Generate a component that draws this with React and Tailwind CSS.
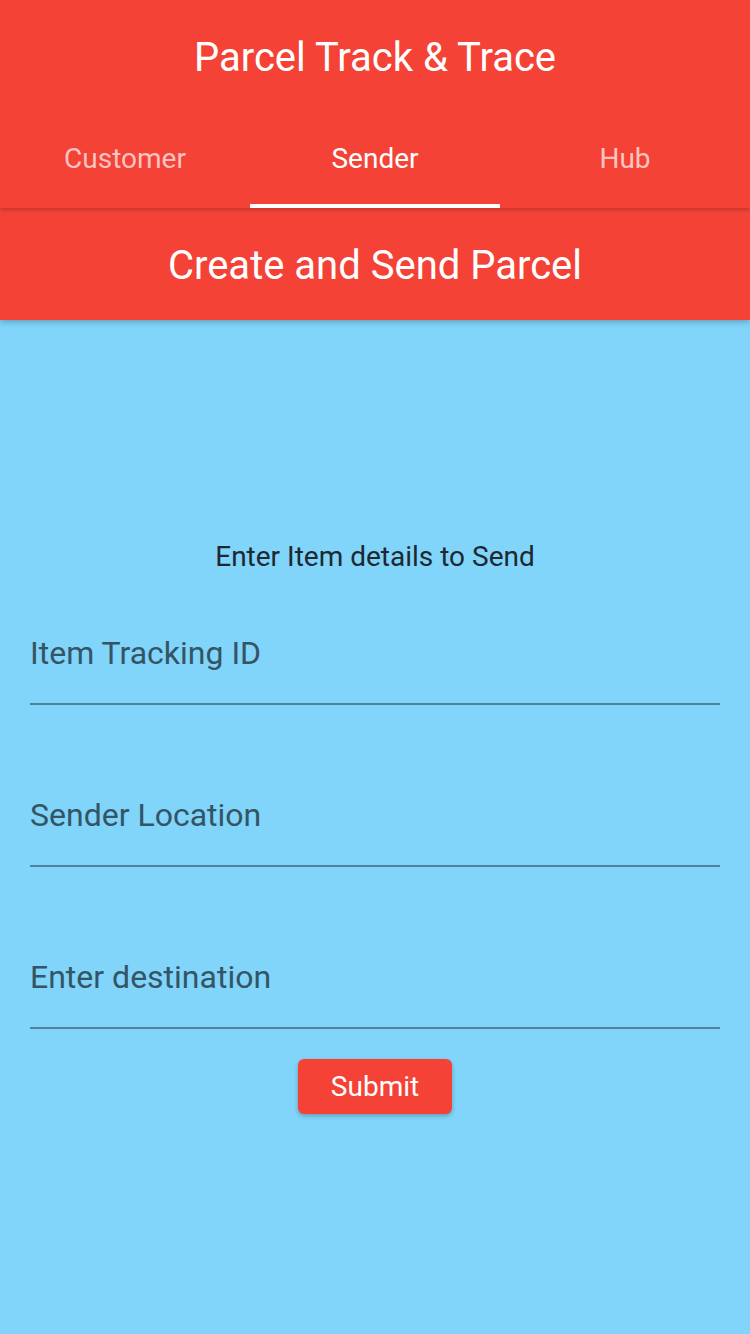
import React from 'react';

const tabs = ['Customer', 'Sender', 'Hub'];

const Field = ({ label, first }) => (
    <div className={`${first ? 'pt-[56px]' : 'pt-[90px]'} mx-[30px] border-b-2 border-[#50839b] pb-[30px]`}>
        <div className="text-[32px] leading-[40px] text-[#345564]">{label}</div>
    </div>
);

const App = () => {
    return (
        <div className="min-h-[1334px] bg-[#81d4fa] font-['Roboto',sans-serif]">
            <div className="relative z-20 bg-[#f44336] shadow-[0_2px_4px_rgba(0,0,0,0.2)]">
                <div className="flex h-[112px] items-center justify-center pt-[4px]">
                    <h1 className="text-[40px] leading-none text-white">Parcel Track &amp; Trace</h1>
                </div>
                <div className="flex h-[96px]">
                    {tabs.map((t) => (
                        <div key={t} className="relative flex flex-1 items-center justify-center pb-[2px]">
                            <span className={`text-[28px] leading-none ${t === 'Sender' ? 'text-white' : 'text-white/70'}`}>{t}</span>
                            {t === 'Sender' && <div className="absolute bottom-0 left-0 right-0 h-[4px] bg-white" />}
                        </div>
                    ))}
                </div>
            </div>
            <div className="relative z-10 flex h-[112px] items-center justify-center bg-[#f44336] pt-[4px] shadow-[0_2px_6px_rgba(0,0,0,0.25)]">
                <h2 className="text-[40px] leading-none text-white">Create and Send Parcel</h2>
            </div>

            <div className="flex flex-col">
                <p className="mt-[217px] text-center text-[28px] leading-[40px] text-[#1c2a30]">Enter Item details to Send</p>
                <Field label="Item Tracking ID" first />
                <Field label="Sender Location" />
                <Field label="Enter destination" />
                <div className="mt-[30px] flex justify-center">
                    <button className="h-[55px] w-[154px] rounded-[6px] bg-[#f44336] text-[28px] leading-none text-white shadow-[0_2px_4px_rgba(0,0,0,0.25)]">
                        Submit
                    </button>
                </div>
            </div>
        </div>
    );
};

export default App;
